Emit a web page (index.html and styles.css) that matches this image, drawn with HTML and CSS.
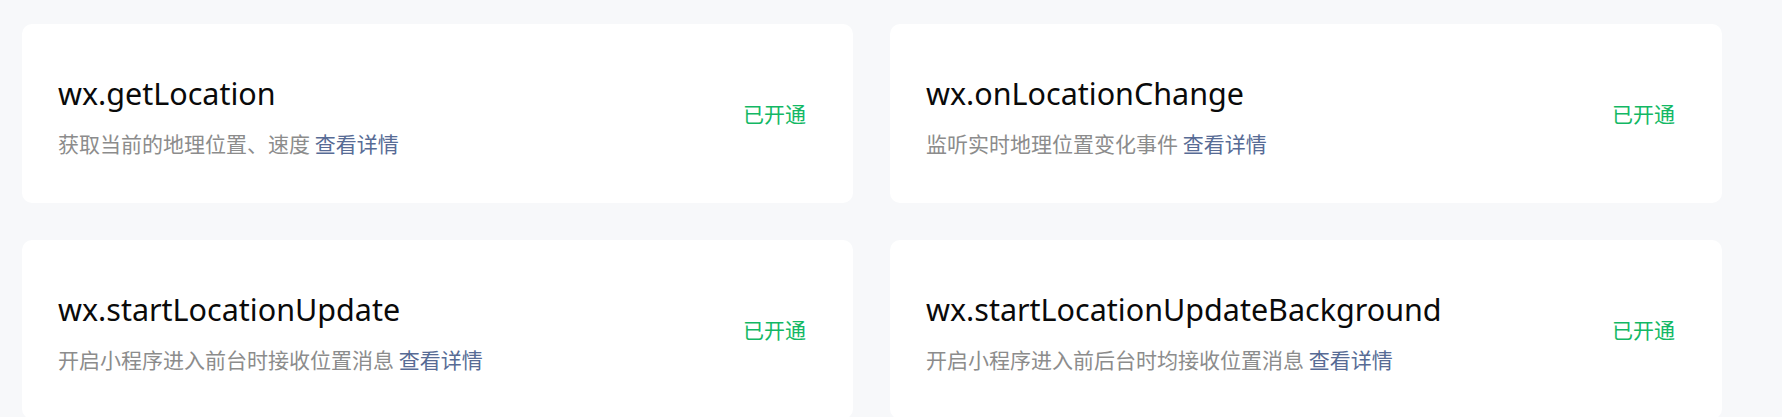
FILE: index.html
```html
<!DOCTYPE html>
<html lang="zh-CN">
<head>
<meta charset="utf-8">
<title>接口权限</title>
<link rel="stylesheet" href="styles.css">
</head>
<body>
<div class="grid">
  <div class="card">
    <div class="info">
      <div class="title">wx.getLocation</div>
      <div class="desc">获取当前的地理位置、速度 <a class="link" href="#">查看详情</a></div>
    </div>
    <div class="status">已开通</div>
  </div>
  <div class="card">
    <div class="info">
      <div class="title">wx.onLocationChange</div>
      <div class="desc">监听实时地理位置变化事件 <a class="link" href="#">查看详情</a></div>
    </div>
    <div class="status">已开通</div>
  </div>
  <div class="card">
    <div class="info">
      <div class="title">wx.startLocationUpdate</div>
      <div class="desc">开启小程序进入前台时接收位置消息 <a class="link" href="#">查看详情</a></div>
    </div>
    <div class="status">已开通</div>
  </div>
  <div class="card">
    <div class="info">
      <div class="title">wx.startLocationUpdateBackground</div>
      <div class="desc">开启小程序进入前后台时均接收位置消息 <a class="link" href="#">查看详情</a></div>
    </div>
    <div class="status">已开通</div>
  </div>
</div>
</body>
</html>
```

FILE: styles.css
```css
html, body {
  margin: 0;
  padding: 0;
  background: #f7f8fa;
}
body {
  font-family: "Noto Sans", "Noto Sans CJK SC", sans-serif;
  overflow: hidden;
  height: 417px;
}
.grid {
  display: grid;
  grid-template-columns: 831px 832px;
  column-gap: 37px;
  row-gap: 37px;
  padding: 24px 0 0 22px;
}
.card {
  background: #ffffff;
  border-radius: 10px;
  height: 179px;
  box-sizing: border-box;
  padding: 0 47px 0 36px;
  display: flex;
  align-items: center;
  justify-content: space-between;
}
.info {
  display: flex;
  flex-direction: column;
  margin-top: 2px;
}
.title {
  font-size: 30.5px;
  line-height: 40px;
  color: #0a0a0a;
}
.desc {
  margin-top: 16px;
  font-family: "Noto Sans CJK SC", sans-serif;
  font-size: 21px;
  line-height: 28px;
  color: #8c8c8c;
}
.link {
  color: #576b95;
  text-decoration: none;
}
.status {
  margin-bottom: 2px;
  font-family: "Noto Sans CJK SC", sans-serif;
  font-size: 21px;
  line-height: 28px;
  color: #12b864;
}
```
